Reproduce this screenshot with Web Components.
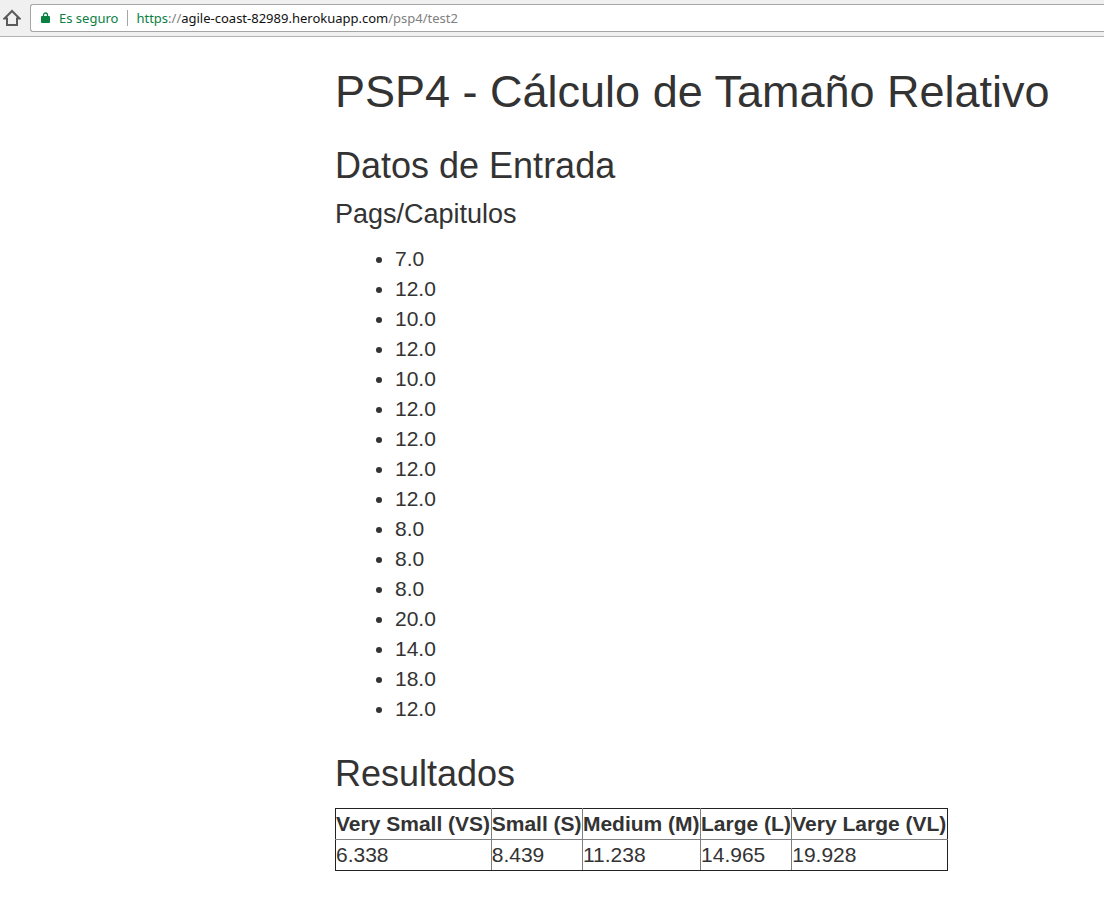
<!DOCTYPE html>
<html lang="es">
<head>
<meta charset="utf-8">
<title>PSP4</title>
<style>
  body { margin: 0; background: #fff; color: #333; font: 21px/30px "Liberation Sans", Arial, sans-serif; }
</style>
</head>
<body>
<browser-bar protocol="https" host="agile-coast-82989.herokuapp.com" path="/psp4/test2">Es seguro</browser-bar>
<report-page>
  <span slot="title">PSP4 - Cálculo de Tamaño Relativo</span>
  <report-section heading="Datos de Entrada">
    <value-list heading="Pags/Capitulos" values="7.0 12.0 10.0 12.0 10.0 12.0 12.0 12.0 12.0 8.0 8.0 8.0 20.0 14.0 18.0 12.0"></value-list>
  </report-section>
  <report-section heading="Resultados">
    <size-table></size-table>
  </report-section>
</report-page>

<script>
class BrowserBar extends HTMLElement {
  connectedCallback() {
    this.attachShadow({ mode: "open" }).innerHTML = `
      <style>
        :host { display: flex; align-items: center; box-sizing: border-box; height: 37px; padding: 4px 0 4px 3px;
          gap: 9px; background: #f0f0f0; border-bottom: 1px solid #b4b4b4;
          font: 13px/20px "Noto Sans", "Open Sans", sans-serif; }
        button { display: flex; align-items: center; margin: 0; padding: 0; border: 0; background: none; font: inherit; color: inherit; }
        .field { flex: 1; display: flex; align-items: center; box-sizing: border-box; height: 28px; padding-left: 10px;
          background: #fff; border: 1px solid #a6a6a6; border-right: 0; border-radius: 3px 0 0 3px; }
        .secure { gap: 9px; color: #0b8043; }
        .secure::after { content: ""; width: 1px; height: 16px; background: #a6a6a6; margin-right: 8px; }
        .url { flex: 1; white-space: nowrap; color: #808080; outline: 0; }
        .scheme { color: #0b8043; }
        .host { color: #111; }
        svg { display: block; }
      </style>
      <button aria-label="Inicio"><svg width="18" height="18" viewBox="0 0 18 18" fill="none" stroke="#5a5a5a" stroke-width="2"><path d="M1.5 9.500 9 2l7.500 7.500H14V16H4V9.500Z"/></svg></button>
      <div class="field">
        <button class="secure"><svg width="9" height="12" viewBox="0 0 9 12"><path d="M2.500 5V3a2 2 0 0 1 4 0v2" fill="none" stroke="#0b8043" stroke-width="1.300"/><rect y="4" width="9" height="7" rx="1" fill="#0b8043"/></svg><slot></slot></button>
        <div class="url" role="textbox" contenteditable="true" spellcheck="false" aria-label="Dirección"><span class="scheme"></span>://<span class="host"></span><span class="path"></span></div>
      </div>`;
    const q = s => this.shadowRoot.querySelector(s);
    q(".scheme").textContent = this.getAttribute("protocol");
    q(".host").textContent = this.getAttribute("host");
    q(".path").textContent = this.getAttribute("path");
  }
}
customElements.define("browser-bar", BrowserBar);

class ReportPage extends HTMLElement {
  connectedCallback() {
    this.attachShadow({ mode: "open" }).innerHTML = `
      <style>
        :host { display: block; padding: 30px 30px 30px 335px; }
        h1 { margin: 0; font-size: 45px; line-height: 49px; font-weight: 500; }
      </style>
      <main><h1><slot name="title"></slot></h1><slot></slot></main>`;
  }
}
customElements.define("report-page", ReportPage);

class ReportSection extends HTMLElement {
  connectedCallback() {
    this.attachShadow({ mode: "open" }).innerHTML = `
      <style>
        :host { display: block; margin-top: 30px; }
        h2 { margin: 0 0 15px; font-size: 36px; line-height: 39px; font-weight: 500; }
      </style>
      <section><h2></h2><slot></slot></section>`;
    this.shadowRoot.querySelector("h2").textContent = this.getAttribute("heading");
  }
}
customElements.define("report-section", ReportSection);

class ValueList extends HTMLElement {
  connectedCallback() {
    this.attachShadow({ mode: "open" }).innerHTML = `
      <style>
        :host { display: block; }
        h3 { margin: 0 0 15px; font-size: 27px; line-height: 29px; font-weight: 500; }
        ul { margin: 0; padding-left: 60px; }
      </style>
      <h3></h3><ul></ul>`;
    this.shadowRoot.querySelector("h3").textContent = this.getAttribute("heading");
    const list = this.shadowRoot.querySelector("ul");
    for (const value of this.getAttribute("values").split(" ")) {
      const item = document.createElement("li");
      item.textContent = value;
      list.append(item);
    }
  }
}
customElements.define("value-list", ValueList);

class SizeTable extends HTMLElement {
  connectedCallback() {
    this.attachShadow({ mode: "open" }).innerHTML = `
      <style>
        :host { display: block; }
        table { width: 613px; border-collapse: collapse; border: 1px solid #222; }
        th, td { padding: 0; border: 1px solid #808080; text-align: left; white-space: nowrap; }
        tr > :first-child { border-left-color: #222; }
        tr > :last-child { border-right-color: #222; }
        th { border-top-color: #222; }
        td { border-bottom-color: #222; }
      </style>
      <table>
        <thead><tr><th scope="col">Very Small (VS)</th><th scope="col">Small (S)</th><th scope="col">Medium (M)</th><th scope="col">Large (L)</th><th scope="col">Very Large (VL)</th></tr></thead>
        <tbody><tr><td>6.338</td><td>8.439</td><td>11.238</td><td>14.965</td><td>19.928</td></tr></tbody>
      </table>`;
  }
}
customElements.define("size-table", SizeTable);
</script>
</body>
</html>
